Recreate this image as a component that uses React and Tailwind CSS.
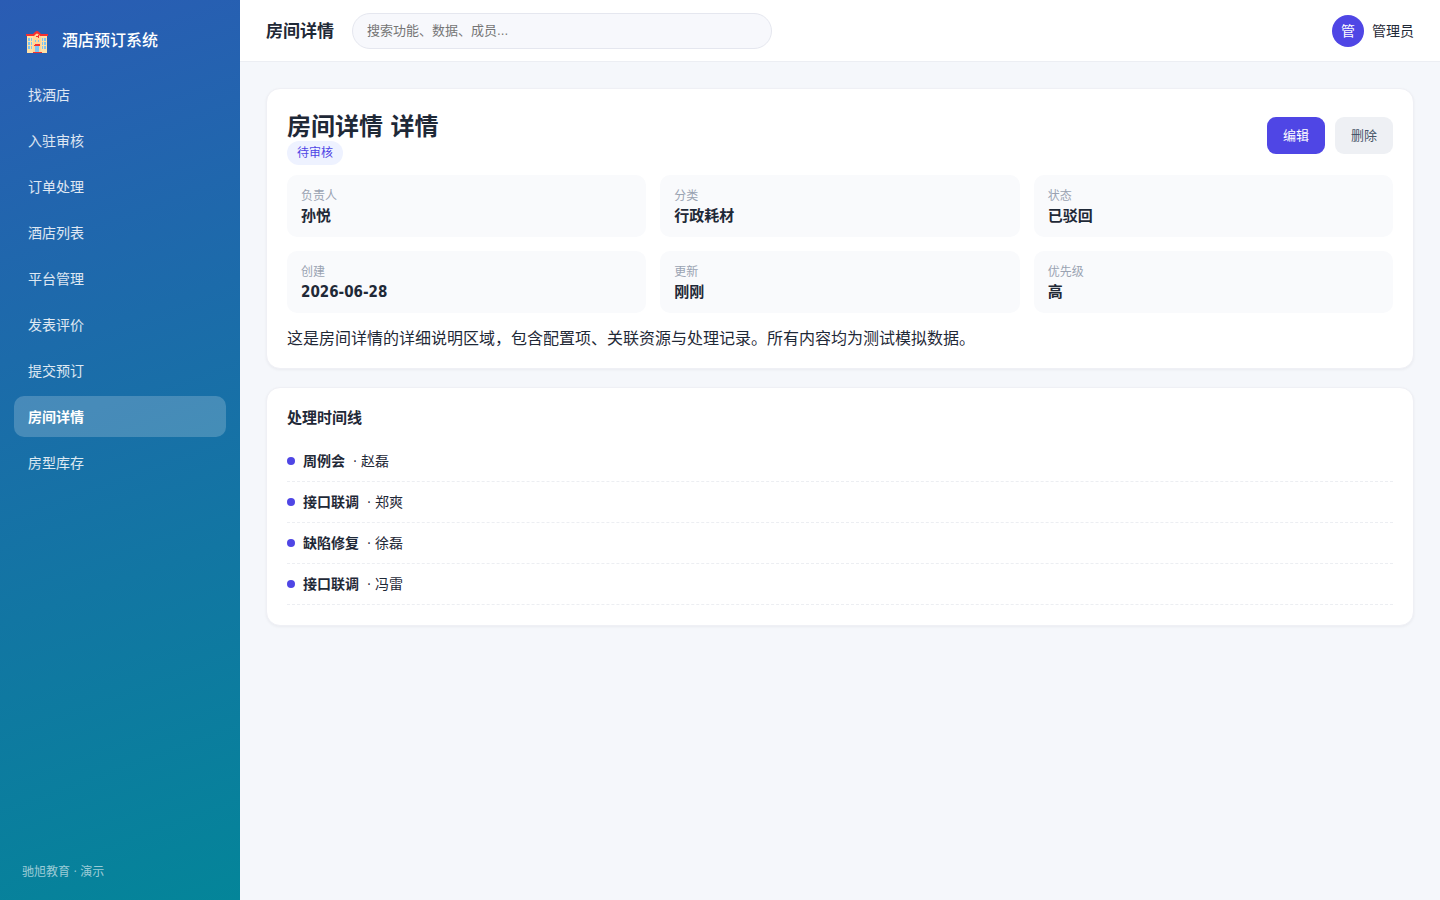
const navItems = [
  '找酒店',
  '入驻审核',
  '订单处理',
  '酒店列表',
  '平台管理',
  '发表评价',
  '提交预订',
  '房间详情',
  '房型库存',
];

const facts = [
  ['负责人', '孙悦'],
  ['分类', '行政耗材'],
  ['状态', '已驳回'],
  ['创建', '2026-06-28'],
  ['更新', '刚刚'],
  ['优先级', '高'],
];

const timeline = [
  ['周例会', '赵磊'],
  ['接口联调', '郑爽'],
  ['缺陷修复', '徐磊'],
  ['接口联调', '冯雷'],
];

function HotelIcon() {
  return (
    <svg className="size-[22px] shrink-0" viewBox="0 0 22 22" aria-hidden="true">
      <path d="M1 4h20v18H1z" fill="#ffe0a6" />
      <path d="M7 22V4L9 2Q11 0 13 2L15 4v18z" fill="#ffd699" />
      <path d="M0 3h7L9 1Q11-1 13 1l2 2h7v2h-8l-2-2q-1-1-2 0L8 5H0z" fill="#f5302f" />
      <path d="M10 5h2V4h1v3h-1V6h-2z" fill="#f5302f" />
      <path
        d="M2 7h2v3H2zM5 7h1v3H5zM2 11h2v3H2zM5 11h1v3H5zM2 15h2v3H2zM5 15h1v3H5zM16 7h1v3h-1zM18 7h2v3h-2zM16 11h1v3h-1zM18 11h2v3h-2zM16 15h1v3h-1zM18 15h2v3h-2zM9 9h1v2H9zM12 9h1v2h-1z"
        fill="#7cc4f5"
      />
      <path d="M9 15h4v6H9z" fill="#7cc4f5" />
      <path d="M9 13h5v2H8v-1h1zM7 21h9v1H7z" fill="#f5302f" />
    </svg>
  );
}

function Sidebar() {
  return (
    <aside className="flex w-60 shrink-0 flex-col bg-[linear-gradient(160deg,#2a5cb4,#048599)] text-white">
      <div className="flex h-[74px] items-center gap-3.5 px-[26px] pt-2.5">
        <HotelIcon />
        <span className="pb-0.5 text-base font-medium">酒店预订系统</span>
      </div>
      <nav className="flex flex-col gap-[5px] px-3.5">
        {navItems.map((item) => (
          <a
            key={item}
            href="#"
            aria-current={item === '房间详情' ? 'page' : undefined}
            className={
              item === '房间详情'
                ? 'flex h-[41px] items-center rounded-[10px] bg-white/20 px-3.5 text-sm font-bold text-white'
                : 'flex h-[41px] items-center rounded-[10px] px-3.5 text-sm text-white/85'
            }
          >
            {item}
          </a>
        ))}
      </nav>
      <div className="mt-auto px-[22px] pb-5 text-xs leading-4 text-white/60">驰旭教育 · 演示</div>
    </aside>
  );
}

function TopBar() {
  return (
    <header className="flex h-[62px] shrink-0 items-center border-b border-[#eceef3] bg-white px-[26px]">
      <div className="mr-[18px] shrink-0 pt-0.5 text-[17px] font-bold">房间详情</div>
      <input
        type="search"
        aria-label="搜索"
        placeholder="搜索功能、数据、成员..."
        className="h-9 w-full max-w-[420px] rounded-full border border-[#e5e7ef] bg-[#f7f8fc] px-3.5 text-[13px] outline-none placeholder:text-[#757575]"
      />
      <div className="ml-auto flex shrink-0 items-center gap-2 text-sm">
        <span className="flex size-8 items-center justify-center rounded-full bg-[#4f46e5] text-white">管</span>
        <span>管理员</span>
      </div>
    </header>
  );
}

export default function App() {
  return (
    <div className="flex min-h-screen bg-[#f5f7fb] font-['DejaVu_Sans_Condensed','Noto_Sans_CJK_SC',sans-serif] text-[#1f2937]">
      <Sidebar />
      <div className="flex min-w-0 flex-1 flex-col">
        <TopBar />
        <main className="flex flex-col gap-[18px] p-[26px]">
          <section className="rounded-[14px] border border-[#eff0f5] bg-white p-5 shadow-[0_1px_3px_rgba(16,24,40,0.05)]">
            <div className="mb-2.5 flex items-start justify-between">
              <div>
                <h1 className="pt-1 text-2xl leading-7 font-bold">房间详情 详情</h1>
                <span className="flex h-6 w-fit items-center rounded-full bg-[#eef2ff] px-2.5 text-xs text-[#4f46e5]">
                  待审核
                </span>
              </div>
              <div className="mt-2 flex gap-2.5 text-[13px]">
                <button type="button" className="h-[37px] rounded-[9px] bg-[#4f46e5] px-4 text-white">
                  编辑
                </button>
                <button type="button" className="h-[37px] rounded-[9px] bg-[#eef0f4] px-4 text-[#475569]">
                  删除
                </button>
              </div>
            </div>
            <dl className="grid grid-cols-3 gap-3.5">
              {facts.map(([label, value]) => (
                <div key={label} className="rounded-[10px] bg-[#f9fafc] px-3.5 py-[11px]">
                  <dt className="text-xs leading-5 text-[#9aa3b2]">{label}</dt>
                  <dd className="text-[15px] leading-5 font-bold">{value}</dd>
                </div>
              ))}
            </dl>
            <p className="mt-4 text-base leading-[19px]">
              这是房间详情的详细说明区域，包含配置项、关联资源与处理记录。所有内容均为测试模拟数据。
            </p>
          </section>
          <section className="rounded-[14px] border border-[#eff0f5] bg-white p-5 shadow-[0_1px_3px_rgba(16,24,40,0.05)]">
            <h2 className="mb-[13px] text-[15px] leading-5 font-bold">处理时间线</h2>
            <ul>
              {timeline.map(([event, person], index) => (
                <li
                  key={index}
                  className="flex h-[41px] items-center gap-2 border-b border-dashed border-[#eceef2] text-sm"
                >
                  <span className="size-2 rounded-full bg-[#4f46e5]" />
                  <b>{event}</b>
                  <span>· {person}</span>
                </li>
              ))}
            </ul>
          </section>
        </main>
      </div>
    </div>
  );
}
